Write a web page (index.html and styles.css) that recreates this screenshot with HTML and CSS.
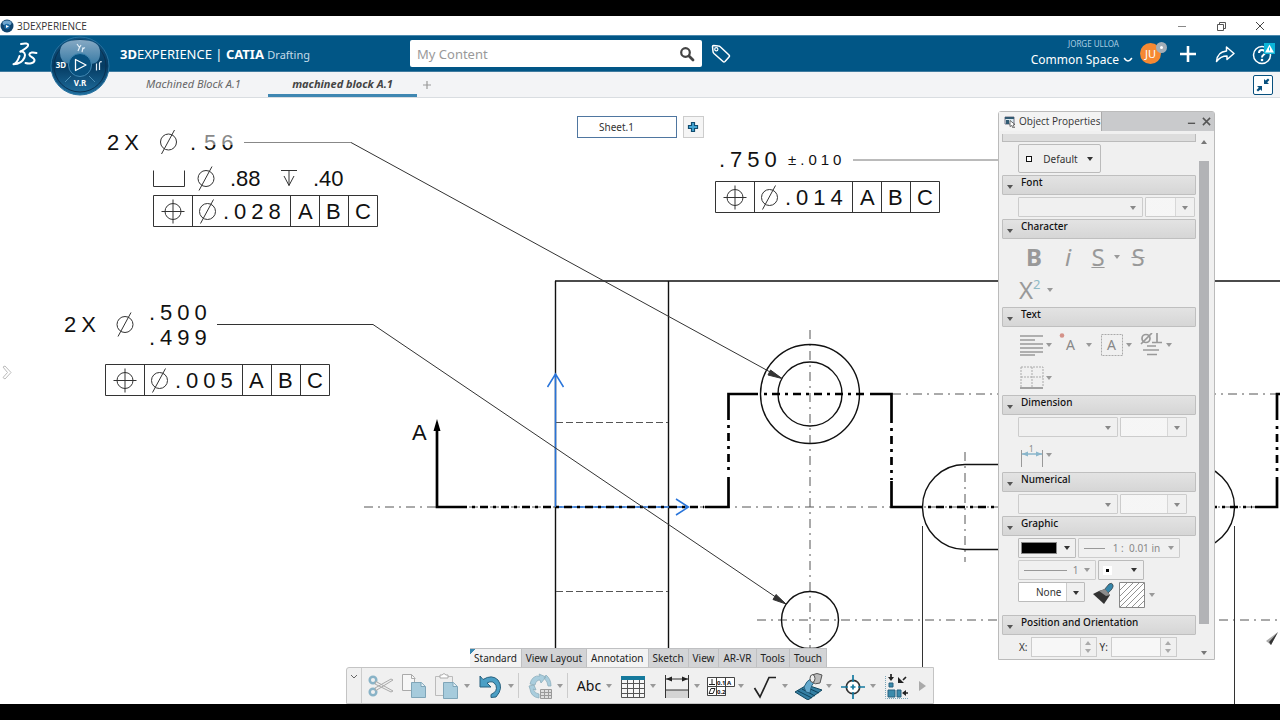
FILE: index.html
```html
<!DOCTYPE html>
<html lang="en">
<head>
<meta charset="utf-8">
<title>3DEXPERIENCE</title>
<link rel="stylesheet" href="styles.css">
</head>
<body>
<div class="app">
  <div class="titlebar">
    <svg class="app-icon" viewBox="0 0 14 14" aria-hidden="true"><circle cx="7" cy="7" r="6.5" fill="#10456f"/><ellipse cx="7" cy="4" rx="4.5" ry="2.5" fill="#6fa6cf"/><circle cx="7" cy="7.5" r="2.8" fill="#1769a5"/><path d="M6 6l3 1.5-3 1.5z" fill="#fff"/></svg>
    <span class="titlebar-name">3DEXPERIENCE</span>
    <button class="win-btn" aria-label="Minimize"><svg viewBox="0 0 10 10"><path d="M1 5.5h8" stroke="#888"/></svg></button>
    <button class="win-btn" aria-label="Restore"><svg viewBox="0 0 10 10"><path d="M1.500 3.500h6v6h-6zM3.500 3.500v-2h6v6h-2" fill="none" stroke="#555"/></svg></button>
    <button class="win-btn" aria-label="Close"><svg viewBox="0 0 10 10"><path d="M1 1l8 8M9 1l-8 8" stroke="#444"/></svg></button>
  </div>

  <header class="header">
    <svg class="ds-logo" viewBox="0 0 26 24" aria-label="Dassault Systemes"><g fill="none" stroke="#fff" stroke-width="2" stroke-linecap="round" stroke-linejoin="round"><path d="M9 2C13 1 17 1.200 16 3.700C15.500 5.500 12 7.500 8.500 9.500"/><path d="M8.500 9.500C12 9 14 12 12.500 15.500C10.500 20 6 22 1.500 22.200C5 21 6.500 17 7.500 14"/><path d="M24.500 11C21 10 17.500 10.300 17.300 12.500C17.300 15 23 15.500 22.500 18.500C22 21.500 17 22 13.500 21"/></g></svg>
    <h1 class="brand"><b>3D</b>EXPERIENCE <span class="brand-bar">|</span> <b>CATIA</b> <small>Drafting</small></h1>
    <div class="search">
      <input class="search-input" type="text" placeholder="My Content" aria-label="Search">
      <button class="search-btn" aria-label="Search"><svg viewBox="0 0 16 16"><circle cx="6.500" cy="6.500" r="4.300" fill="none" stroke="#444" stroke-width="2.200"/><path d="M10 10l4 4" stroke="#444" stroke-width="2.800" stroke-linecap="round"/></svg></button>
    </div>
    <button class="icon-btn tag-btn" aria-label="Tags"><svg viewBox="0 0 20 20"><path d="M1.500 2.500q0-1 1-1l5 .5q1 0 2 1l8.500 8q1 1 0 2l-4 4.500q-1 1-2 0L3 9.500Q2 8.500 2 7.500z" fill="none" stroke="#fff" stroke-width="1.500"/><circle cx="5.300" cy="5.300" r="1.600" fill="none" stroke="#fff" stroke-width="1.200"/></svg></button>
    <div class="user">
      <span class="user-name">JORGE ULLOA</span>
      <button class="space-btn">Common Space <svg viewBox="0 0 10 10"><path d="M1.500 3.500q1.800 2.500 3.500 2.500t3.500-2.500" fill="none" stroke="#fff" stroke-width="1.600" stroke-linecap="round"/></svg></button>
    </div>
    <button class="avatar" aria-label="Profile">JU<span class="status"></span></button>
    <button class="icon-btn" aria-label="Add"><svg viewBox="0 0 20 20"><path d="M10 2v16M2 10h16" stroke="#fff" stroke-width="2.600"/></svg></button>
    <button class="icon-btn" aria-label="Share"><svg viewBox="0 0 20 20"><path d="M11.500 3l7.500 6.500-7 6v-3.500C7.500 12 4.500 13.500 1.500 17.500C2 11.500 5.500 7.500 11.500 7z" fill="none" stroke="#fff" stroke-width="1.500" stroke-linejoin="round"/></svg></button>
    <button class="icon-btn help-btn" aria-label="Help"><svg viewBox="0 0 24 24"><circle cx="12" cy="13" r="8.500" fill="none" stroke="#fff" stroke-width="1.500"/><path d="M9 11q0-3 3-3t3 2.600q0 1.400-1.500 2.200T12 15.500" fill="none" stroke="#fff" stroke-width="2"/><circle cx="12" cy="18" r="1.300" fill="#fff"/><path d="M14 1h11v11h-11z" fill="#0bb4d8"/><path d="M19.500 2.500l4.500 8h-9z" fill="#fff"/><path d="M19.500 5.500v3" stroke="#0bb4d8"/></svg></button>
    <button class="compass" aria-label="Compass">
      <svg viewBox="0 0 62 62">
        <defs><linearGradient id="disc" x2="0" y2="1"><stop stop-color="#0f527f"/><stop offset=".5" stop-color="#053b62"/><stop offset="1" stop-color="#1f6f9f"/></linearGradient><linearGradient id="shine" x2="0" y2="1"><stop stop-color="#86a9c4"/><stop offset="1" stop-color="#397ba5"/></linearGradient></defs>
        <circle cx="31" cy="30" r="29" fill="url(#disc)" stroke="#2873a1"/>
        <circle cx="31" cy="30" r="26" fill="none" stroke="#0a3152" stroke-width="1"/>
        <path d="M11 17Q10 4 31 4T51 17Q51 28 41 28Q39 20 31 20T21 28Q11 27 11 17z" fill="url(#shine)"/>
        <circle cx="31" cy="29" r="11.500" fill="#07507e" stroke="#4288b2"/>
        <path d="M26.500 23.500l10.500 5.500-10.500 5.500z" fill="none" stroke="#fff" stroke-width="1.300" stroke-linejoin="round"/>
        <path d="M22 40l-6 6M40 40l6 6" stroke="#4b8eb5"/>
        <path d="M28 8l2.500 3.500L32 9M30.500 11.500L29 15M34 11.500L33 16M34 13q1-1.500 2-1" fill="none" stroke="#e2eef7" stroke-width="1.200"/>
        <path d="M47.500 27.500v7M50.500 27v7M50.500 27q1-2 2.200-1" fill="none" stroke="#e2eef7" stroke-width="1.200"/>
        <text x="12" y="32" class="compass-text">3D</text><text x="31" y="50" class="compass-text">V.R</text>
      </svg>
    </button>
  </header>

  <nav class="doc-tabs">
    <button class="doc-tab">Machined Block A.1</button>
    <button class="doc-tab doc-tab-on">machined block A.1</button>
    <button class="add-tab" aria-label="New tab"><svg viewBox="0 0 10 10"><path d="M5 1v8M1 5h8" stroke="#999" stroke-width="1.200"/></svg></button>
    <button class="collapse-btn" aria-label="Collapse"><svg viewBox="0 0 16 16"><path d="M9 7V2l1.600 1.600L13 1.500 14.500 3l-2.300 2.300L14 7zM7 9v5l-1.600-1.600L3 14.500 1.500 13l2.300-2.300L2 9z" fill="#07507e"/></svg></button>
  </nav>

  <main class="canvas">
    <svg class="drawing" viewBox="0 98 1280 606" preserveAspectRatio="xMinYMin slice">
      <defs>
        <g id="diameter"><circle r="8"/><path d="M-7 12L6 -12"/></g>
        <g id="frame" class="thin"><path d="M0 0h224v31h-224zM39 0v31M137 0v31M166 0v31M195 0v31"/><circle cx="19.500" cy="16" r="8"/><path d="M8 16h23M19.500 4v24"/><use href="#diameter" x="54" y="16"/></g>
      </defs>

      <g class="center">
        <path d="M364 507H1280M892 394H1280M757 620H1280M810 330V648M965 452V562"/>
      </g>
      <g class="outline">
        <path d="M555.500 704V281M668.500 281V704M555 281H1280"/>
        <circle cx="810" cy="394" r="49.500"/><circle cx="810" cy="394" r="32"/><circle cx="810" cy="620" r="28.500"/>
        <rect x="922.500" y="464.500" width="312" height="85" rx="42.500"/>
      </g>
      <path class="hidden-edge" d="M556 422.500H668M556 591.500H668"/>
      <path class="axis" d="M555.500 507V375M547.500 387L555.500 374L563.500 387M556 507H688M676 499L688.500 507L676 515"/>
      <g class="section">
        <path d="M437 430V507H467M705 507H728.500V477M728.500 420V394H758M870 394H891.500V423M891.500 481V507H922M1255 507H1277V477M1277 420V394H1280"/>
        <path class="section-dash" d="M472 507H704M764 394H869M728.500 425V475M891.500 428V480M928 507H1252M1277 426V475"/>
      </g>
      <path d="M437 419l-3.500 12h7z"/>
      <g class="thin">
        <path stroke="#888" d="M244 142.500H351"/>
        <path d="M351 142.500L782 378.500M217 324.500H373L786 604M922.500 526V704M1234.500 526V704"/>
        <path stroke="#777" d="M853 160H1000"/>
        <path fill="#333" d="M782 378.500l-14-3.500 2.500-5zM786 604l-13-4.500 3-5z"/>
        <path d="M153.500 170.500v16h31v-16M281 170.500h16M289 170.500v15M284 176l5 9.500 5-9.500"/>
        <use href="#diameter" x="168.500" y="142"/>
        <use href="#diameter" x="206" y="178.500"/>
        <use href="#diameter" x="125" y="324.500"/>
      </g>
      <use href="#frame" x="153.500" y="195.500"/>
      <use href="#frame" x="105.500" y="364.500"/>
      <use href="#frame" x="715.500" y="181.500"/>
      <linearGradient id="fade" x2="0" y2="1"><stop offset=".6" stop-color="#888"/><stop offset=".6" stop-color="#111"/></linearGradient>
      <g class="note">
        <text x="107" y="150">2X</text><text x="190" y="150">.</text><text class="fading" x="204" y="150">56</text>
        <text class="tight" x="230" y="186">.88</text><text class="tight" x="313" y="186">.40</text>
        <text x="223" y="219">.028</text><text x="298" y="219">A</text><text x="326" y="219">B</text><text x="355" y="219">C</text>
        <text x="64" y="332">2X</text><text x="149" y="320">.500</text><text x="149" y="345">.499</text>
        <text x="175" y="388">.005</text><text x="249" y="388">A</text><text x="278" y="388">B</text><text x="307" y="388">C</text>
        <text x="719" y="167">.750</text><text class="tolerance" x="788" y="165">±.010</text>
        <text x="785" y="205">.014</text><text x="860" y="205">A</text><text x="888" y="205">B</text><text x="917" y="205">C</text>
        <text x="412" y="440">A</text>
      </g>
      <path fill="#aaa" d="M1266 641l12-9-7 13z"/><path fill="#333" d="M1271 645l-2-3 9-10z"/>
      <path d="M3 367l2-1 6 6.500-6 6.500-2-1.500 4.500-5z" fill="none" stroke="#bbb"/>
    </svg>

    <div class="sheets">
      <button class="sheet">Sheet.1</button>
      <button class="sheet-add" aria-label="Add sheet"><svg viewBox="0 0 12 12"><path d="M4.500 1.500h3v3h3v3h-3v3h-3v-3h-3v-3h3z" fill="#45a7d5" stroke="#124d70" stroke-width="1.200"/></svg></button>
    </div>

    <section class="panel">
      <div class="panel-top">
        <h2 class="panel-tab"><svg viewBox="0 0 12 12"><path d="M1 1h9v7H1z" fill="#dcebf2" stroke="#778"/><path d="M1 1h9v2H1zM2 4h3v4H2z" fill="#315a72"/><path d="M6 4.500l5 4-2 .5 1.500 2.500-1.500.5-1.200-2.500-1.800 1z" fill="#fff" stroke="#333" stroke-width=".7"/></svg>Object Properties</h2>
        <button class="panel-btn" aria-label="Minimize"><svg viewBox="0 0 10 10"><path d="M1 7h8" stroke="#555" stroke-width="1.500"/></svg></button>
        <button class="panel-btn" aria-label="Close"><svg viewBox="0 0 10 10"><path d="M1 1l8 8M9 1l-8 8" stroke="#555" stroke-width="1.700"/></svg></button>
      </div>
      <div class="panel-main">
        <div class="groups">
          <div class="group-cut"></div>
          <div class="row"><button class="default-btn"><span class="square"></span>Default<i class="caret dark"></i></button></div>
          <h3 class="group">Font</h3>
          <div class="row"><span class="combo combo-l"><select aria-label="Font name" disabled></select></span><span class="combo combo-s"><select aria-label="Font size" disabled></select></span></div>
          <h3 class="group">Character</h3>
          <div class="row tall letters">
            <button class="fmt" disabled><b>B</b></button><button class="fmt" disabled><i>i</i></button><button class="fmt underlined" disabled><u>S</u></button><i class="caret"></i><button class="fmt struck" disabled><s>S</s></button>
          </div>
          <div class="row tall letters"><button class="fmt sup" disabled>X<sup>2</sup></button><i class="caret"></i></div>
          <h3 class="group">Text</h3>
          <div class="row tall tools-row">
            <button class="mini" aria-label="Justify"><svg viewBox="0 0 24 24"><path d="M1 3h23M1 7h15M1 11h23M1 15h23M1 19h23M1 22h15" stroke="#999" stroke-width="1.600"/></svg><i class="caret"></i></button>
            <button class="mini" aria-label="Anchor"><svg viewBox="0 0 24 24"><circle cx="3" cy="2.500" r="2.300" fill="#d49289"/><text class="glyph" x="7" y="17">A</text></svg><i class="caret"></i></button>
            <button class="mini" aria-label="Frame"><svg viewBox="0 0 24 24"><path d="M2.500 1.500h21v21h-21z" fill="none" stroke="#aaa" stroke-dasharray="2 1"/><text class="glyph" x="8" y="17">A</text></svg><i class="caret"></i></button>
            <button class="mini" aria-label="Symbols"><svg viewBox="0 0 24 24"><g fill="none" stroke="#999" stroke-width="1.700"><circle cx="7" cy="5.500" r="4"/><path d="M2 11L13 0M18 0v9M13 9.500h10M8 13h9M4 17h16M8 21.500h10"/></g></svg><i class="caret"></i></button>
          </div>
          <div class="row tall tools-row"><button class="mini" aria-label="Borders"><svg viewBox="0 0 24 24"><path d="M2 1h22v20M2 1v20M13 1v20M2 11h22" fill="none" stroke="#aaa" stroke-dasharray="2 1"/><path d="M1 22h23" stroke="#888" stroke-width="1.500"/></svg><i class="caret"></i></button></div>
          <h3 class="group">Dimension</h3>
          <div class="row"><span class="combo combo-m"><select aria-label="Tolerance type" disabled></select></span><span class="combo combo-n"><select aria-label="Tolerance" disabled></select></span></div>
          <div class="row tall tools-row"><button class="mini" aria-label="Dimension line"><svg viewBox="0 0 24 24"><path d="M2.500 7v17M23.500 7v17" stroke="#999"/><path d="M3 11h20" stroke="#8ab6cb" stroke-width="1.500"/><path d="M3 11l6-2.500v5zM23 11l-6-2.500v5z" fill="#8ab6cb"/><text class="tiny-glyph" x="10" y="9">1</text></svg><i class="caret"></i></button></div>
          <h3 class="group">Numerical</h3>
          <div class="row"><span class="combo combo-m"><select aria-label="Numerical format" disabled></select></span><span class="combo combo-n"><select aria-label="Precision" disabled></select></span></div>
          <h3 class="group">Graphic</h3>
          <div class="row graphic">
            <button class="box color" aria-label="Color"><span class="swatch"></span><i class="caret dark"></i></button>
            <button class="box weight" disabled><span class="stroke short"></span>1 : &nbsp;0.01 in<i class="caret"></i></button>
          </div>
          <div class="row graphic">
            <button class="box line-type" disabled><span class="stroke"></span>1<i class="caret"></i></button>
            <button class="box point" aria-label="Point symbol"><span class="dot"></span><i class="caret dark"></i></button>
          </div>
          <div class="row fill-row">
            <span class="combo none-combo"><select aria-label="Layer"><option>None</option></select></span>
            <button class="mini" aria-label="Paint"><svg viewBox="0 0 24 24"><path d="M12 8l5-6q3-2 4 1t-5 8z" fill="#3686aa" stroke="#333" stroke-width=".7"/><path d="M7 9l6-2 5 6-6 9L1 12z" fill="#333"/><path d="M7 9l6-2 5 6-4 1z" fill="#8c8c8c"/></svg></button>
            <button class="mini hatch" aria-label="Hatch"><svg viewBox="0 0 26 26"><path d="M.5.5h25v25H.5z" fill="#fff" stroke="#888"/><path d="M1 8L8 1M1 14L14 1M1 20L20 1M1 25L25 1M7 25L25 7M13 25L25 13M19 25l6-6" stroke="#777" stroke-width=".8"/></svg><i class="caret"></i></button>
          </div>
          <h3 class="group">Position and Orientation</h3>
          <div class="row position">
            <label for="px">X:</label><span class="spin"><input id="px" type="text" disabled><span class="spin-arrows"><i></i><i></i></span></span>
            <label for="py">Y:</label><span class="spin"><input id="py" type="text" disabled><span class="spin-arrows"><i></i><i></i></span></span>
          </div>
        </div>
        <div class="scroll"><i class="scroll-up"></i><span class="thumb"></span><i class="caret"></i></div>
      </div>
    </section>

    <div class="dock">
      <div class="bar-tabs">
        <button class="bar-tab on first">Standard</button><button class="bar-tab">View Layout</button><button class="bar-tab on">Annotation</button><button class="bar-tab">Sketch</button><button class="bar-tab">View</button><button class="bar-tab">AR-VR</button><button class="bar-tab">Tools</button><button class="bar-tab">Touch</button>
      </div>
      <div class="toolbar">
        <button class="fold" aria-label="Collapse toolbar"><svg viewBox="0 0 10 10"><path d="M2 3l3 3 3-3" fill="none" stroke="#666"/></svg></button>
        <button class="tool plain" aria-label="Cut"><svg viewBox="0 0 28 28"><g fill="none" stroke="#89b3c7" stroke-width="2.500"><circle cx="6" cy="8" r="3.300"/><circle cx="6" cy="20" r="3.300"/></g><path d="M9 9.500L26 19l-2 1-16-8zM9 18.500L26 8l-2-1L8 16z" fill="#eee" stroke="#aaa"/></svg></button>
        <button class="tool plain" aria-label="Copy"><svg viewBox="0 0 28 28"><path d="M2.500 2.500h9l3 3v13h-12z" fill="#f7f7f7" stroke="#aaa"/><path d="M11.500 2.500v4h4" fill="none" stroke="#aaa"/><path d="M11.500 10.500h10l4 4v11h-14z" fill="#a6cbdc" stroke="#7fa5b8"/><path d="M21 10.500v4h4" fill="#e6f1f6" stroke="#7fa5b8"/></svg></button>
        <button class="tool" aria-label="Paste"><svg viewBox="0 0 28 28"><path d="M2.500 4.500h17v19h-17z" fill="#eee" stroke="#bbb"/><path d="M7 6V3h2q2-3 4 0h2v3z" fill="#fff" stroke="#aaa"/><path d="M10.500 10.500h10l4 4v12h-14z" fill="#a6cbdc" stroke="#7fa5b8"/><path d="M20 10.500v4h4" fill="#e6f1f6" stroke="#7fa5b8"/></svg><i class="caret"></i></button>
        <button class="tool" aria-label="Undo"><svg viewBox="0 0 28 28"><path d="M3 4l3 3.500Q15 2 21 8q6 8-2 17l-5 .5v-3q7-3 5-9-3-6-9-2.500l4 4H3z" fill="#4b9fc5" stroke="#28617e"/></svg><i class="caret"></i></button>
        <span class="sep"></span>
        <button class="tool" aria-label="Update"><svg viewBox="0 0 28 28"><g fill="#a9cddd" stroke="#8daebc" stroke-width=".8"><path d="M4 12Q6 3 14 4l-1-2 7 3-5 6-1-3q-4 0-5 5zM18 6l2-3q5 4 5 11h-3q0-4-4-8zM3 14l5-1 2 5-3-1q2 5 6 5v4Q5 25 4 17z"/></g><path d="M14.500 17.500h11v9h-11zM14 20.500h11M14 23.500h11M18.500 17v9M22.500 17v9" fill="#ddd" stroke="#999"/></svg><i class="caret"></i></button>
        <span class="sep"></span>
        <button class="tool text-tool"><span>Abc</span><i class="caret"></i></button>
        <button class="tool" aria-label="Table"><svg viewBox="0 0 28 28"><path d="M2.500 4.500h23v21h-23zM2.500 11.500h23M2.500 16.500h23M2.500 21.500h23M8.500 7v18M14.500 7v18M20.500 7v18" fill="#f7f7f7" stroke="#555"/><path d="M2 4h24v4H2z" fill="#15799c"/></svg><i class="caret"></i></button>
        <button class="tool" aria-label="Dimensions"><svg viewBox="0 0 28 28"><path d="M3 18h22v8H3z" fill="#d4d4d4"/><path d="M2.500 3v23M25.500 3v23M3 7h22M3 18h22" stroke="#333"/><path d="M3 7l6-2.500v5zM25 7l-6-2.500v5z" fill="#222"/></svg><i class="caret"></i></button>
        <button class="tool" aria-label="Tolerances"><svg viewBox="0 0 28 28"><path d="M.5 5.500h27v9H.5zM9.500 5.500v18M18.500 5.500v18M.5 14.500h18v9H.5z" fill="#fff" stroke="#444"/><path d="M2 12.500h6M5 7v5.500M2 21.500l2-5h4l-2 5z" fill="none" stroke="#222"/><text class="micro-glyph" x="10" y="13">0.1</text><text class="micro-glyph" x="20" y="13">A</text><text class="micro-glyph" x="10" y="22">0.2</text></svg><i class="caret"></i></button>
        <button class="tool" aria-label="Roughness"><svg viewBox="0 0 28 28"><path d="M3.500 16l5.500 9L18 5.500h7" fill="none" stroke="#222" stroke-width="1.700"/></svg><i class="caret"></i></button>
        <button class="tool" aria-label="Area fill"><svg viewBox="0 0 28 28"><path d="M0 20l12-7 15 5-14 10z" fill="#347fa3" stroke="#12475f"/><path d="M3 19l14 7M7 17l13 7M11 15l13 6" stroke="#0e425b"/><path d="M11 20L9 15q2-6 8-9l3 4q-4 2-5 11z" fill="#65aace" stroke="#28617e"/><path d="M17 3q5-3 10 0l-2 8q-5 2-8-1z" fill="#bbb" stroke="#555"/><ellipse cx="17.500" cy="6.500" rx="2.500" ry="3.800" fill="#eee" stroke="#555"/></svg><i class="caret"></i></button>
        <button class="tool" aria-label="Center line"><svg viewBox="0 0 28 28"><circle cx="14" cy="15" r="6.700" fill="#fff" stroke="#333" stroke-width="1.700"/><path d="M14 3v7M14 20v7M2 15h7M19 15h7M11.500 15h5M14 12.500v5" stroke="#1579a0" stroke-width="1.700"/></svg><i class="caret"></i></button>
        <button class="tool plain" aria-label="Positioning"><svg viewBox="0 0 28 28"><path d="M2.500 4v22.500H25" fill="none" stroke="#7aa6b9" stroke-dasharray="1 1"/><path d="M6 11h4v4H6zM5 18h7v7H5zM14 18h4v7h-4z" fill="#3b8bac" stroke="#28617e"/><path d="M8 2v3M23 5l-3 3M25 21h-3" stroke="#222" stroke-width="1.700"/><path d="M5 5h6L8 9zM15 11v-6l6 6zM19 21l4-3v6z" fill="#222"/></svg></button>
        <button class="more" aria-label="More"><i></i></button>
      </div>
    </div>
  </main>
</div>
</body>
</html>
```
FILE: styles.css
```css
* { box-sizing: border-box; }
body { margin: 0; background: #000; color: #333; font-family: "Noto Sans", "Open Sans", sans-serif; font-size: 11px; }
button, input, select { font: inherit; color: inherit; padding: 0; border: 0; background: none; border-radius: 0; }
button { display: flex; align-items: center; justify-content: center; white-space: nowrap; }
svg { display: block; flex: none; }
h1, h2, h3 { margin: 0; font-weight: 400; }

.app { min-height: 100vh; padding: 16px 0; display: flex; flex-direction: column; }
.titlebar { height: 20px; background: #fff; display: flex; align-items: center; padding-right: 1px; border-bottom: 1px solid #4a89ae; }
.app-icon { width: 14px; height: 14px; }
.titlebar-name { flex: 1; padding-left: 3px; font-family: "Open Sans", sans-serif; font-size: 10px; }
.win-btn { width: 39px; height: 19px; }
.win-btn svg { width: 10px; height: 10px; }

.header { position: relative; height: 36px; background: #015686; color: #fff; display: flex; align-items: center; border-bottom: 1px solid #3f7ba0; }
.ds-logo { width: 26px; height: 24px; margin-left: 12px; }
.brand { width: 372px; padding-left: 82px; font-size: 13px; white-space: nowrap; }
.brand small { font-size: 11px; color: #c5dce9; }
.search { width: 292px; height: 27px; background: #fff; border-radius: 2px; display: flex; }
.search-input { flex: 1; min-width: 0; padding-left: 7px; font-size: 13px; outline: 0; }
.search-input::placeholder { color: #999; opacity: 1; }
.search-btn { width: 30px; }
.search-btn svg { width: 16px; height: 16px; }
.icon-btn { width: 37px; height: 34px; }
.icon-btn svg { width: 20px; height: 20px; }
.help-btn svg { width: 24px; height: 24px; overflow: visible; }
.tag-btn { margin-right: auto; }
.user { display: flex; flex-direction: column; align-items: flex-end; margin-right: 7px; }
.user-name { font-size: 8px; line-height: 12px; color: #a9cde2; padding-right: 14px; }
.space-btn { font-size: 12px; line-height: 20px; gap: 4px; }
.space-btn svg { width: 10px; height: 10px; }
.avatar { position: relative; width: 21px; height: 21px; margin-right: 8px; border-radius: 50%; background: #f68932; font-size: 11px; }
.status { position: absolute; right: -6px; top: -1px; width: 11px; height: 11px; border-radius: 50%; border: 4px solid #a3aeb7; background: #fff; }
.compass { position: absolute; left: 49px; top: 0; z-index: 2; }
.compass svg { width: 62px; height: 62px; }
.compass-text { font-size: 8px; font-weight: 700; fill: #fff; text-anchor: middle; }

.doc-tabs { height: 26px; background: #f3f4f6; border-bottom: 1px solid #d9dde1; display: flex; align-items: stretch; padding-left: 119px; color: #666; }
.doc-tab { width: 149px; font-style: italic; font-size: 11px; border-bottom: 3px solid transparent; }
.doc-tab-on { font-weight: 700; color: #444; border-color: #3f87b2; }
.add-tab { width: 20px; }
.add-tab svg { width: 10px; height: 10px; }
.collapse-btn { width: 20px; height: 20px; margin: 3px 7px 0 auto; border: 1px solid #07507e; border-radius: 2px; background: #fff; }
.collapse-btn svg { width: 16px; height: 16px; }

.canvas { position: relative; flex: 1; min-height: 606px; overflow: hidden; background: #fff; }
.drawing { position: absolute; width: 100%; height: 100%; }
.thin { fill: none; stroke: #333; stroke-width: 1; }
.outline { fill: none; stroke: #111; stroke-width: 1.400; }
.center { fill: none; stroke: #555; stroke-dasharray: 9 5 2 5; }
.hidden-edge { fill: none; stroke: #555; stroke-dasharray: 7 3; }
.axis { fill: none; stroke: #2874da; stroke-width: 1.500; }
.section { fill: none; stroke: #000; stroke-width: 2.700; }
.section-dash { stroke-dasharray: 3 5 8 5; }
/* Drafting lettering is set wide */
.note { font-family: "Liberation Sans", sans-serif; font-size: 22px; letter-spacing: 5px; fill: #111; }
.note .tight { letter-spacing: 0; }
.note .tolerance { font-size: 15px; letter-spacing: 4px; }
.note .fading { fill: url(#fade); }

.sheets { position: absolute; left: 0; right: 0; top: 18px; display: flex; justify-content: center; gap: 6px; }
.sheet { width: 100px; height: 22px; border: 1px solid #4f76a0; background: #fff; padding-right: 20px; font-size: 10px; }
.sheet-add { width: 21px; height: 22px; border: 1px solid #ccc; background: #f5f5f5; }
.sheet-add svg { width: 12px; height: 12px; }

.panel { position: absolute; right: 65px; top: 13px; width: 217px; border: 1px solid #bbb; border-radius: 3px 3px 0 0; background: #f0f0f0; }
.panel-top { height: 19px; background: #c9cacc; display: flex; align-items: center; padding-right: 0; }
.panel-tab { height: 19px; width: 103px; display: flex; align-items: center; gap: 3px; padding-left: 5px; margin-right: auto; background: #f3f3f3; border-right: 1px solid #aaa; font-family: "Open Sans", sans-serif; font-size: 10px; line-height: 19px; white-space: nowrap; }
.panel-tab svg { width: 12px; height: 12px; }
.panel-btn { width: 15px; height: 15px; }
.panel-btn svg { width: 9px; height: 9px; }
.panel-main { display: flex; padding: 3px 4px 2px 3px; gap: 2px; }
.groups { flex: 1; min-width: 0; display: flex; flex-direction: column; gap: 2px; }
.group-cut { height: 8px; background: #ddd; border: 1px solid #bbb; border-top: 0; }
.group { position: relative; height: 20px; padding-left: 18px; background: linear-gradient(#e3e3e3, #d6d6d6); border: 1px solid #bfbfbf; border-radius: 1px; font-size: 10px; font-weight: 500; line-height: 13px; color: #111; }
.group::before { content: ""; position: absolute; left: 4px; top: 9px; border: 3px solid transparent; border-top: 4px solid #555; border-bottom: 0; }
.row { display: flex; align-items: center; gap: 2px; padding-left: 16px; min-height: 20px; }
.tall { height: 31px; }
.caret { display: inline-block; flex: none; width: 0; height: 0; border: 3px solid transparent; border-top: 4px solid #999; border-bottom: 0; }
.dark { border-top-color: #333; }
.default-btn { width: 83px; height: 29px; border: 1px solid #bbb; border-radius: 2px; gap: 9px; font-size: 10px; }
.square { width: 6px; height: 6px; margin-right: 2px; border: 1px solid #111; background: #fff; }
.combo { position: relative; height: 20px; border: 1px solid #ccc; border-radius: 1px; background: #f0f0f0; }
.combo::after { content: ""; position: absolute; right: 6px; top: 8px; border: 3px solid transparent; border-top: 4px solid #888; border-bottom: 0; pointer-events: none; }
.combo select { width: 100%; height: 100%; appearance: none; display: block; }
.combo-l { width: 125px; }
.combo-s { width: 50px; }
.combo-m { width: 100px; }
.combo-n { width: 67px; }
.combo-s select, .combo-n select { background: linear-gradient(90deg, #f8f8f8 calc(100% - 19px), #ccc calc(100% - 19px), #ccc calc(100% - 18px), #f0f0f0 calc(100% - 18px)); }
.letters { color: #999; gap: 0; }
.fmt { font-size: 24px; line-height: 30px; width: 32px; color: #999; }
.fmt u, .fmt s { text-decoration-thickness: 1px; }
.fmt i { padding-left: 4px; }
.struck { width: 36px; }
.sup { width: 29px; justify-content: flex-start; padding-left: 1px; }
.fmt sup { font-size: 13px; line-height: 13px; margin-bottom: 10px; color: #8fbac6; }
.tools-row { gap: 6px; }
.mini { gap: 4px; }
.mini svg { width: 26px; height: 24px; }
.mini .caret { margin-left: -2px; }
.glyph { font-size: 14px; fill: #888; }
.tiny-glyph { font-size: 8px; fill: #888; }
.box { height: 20px; border: 1px solid #bbb; border-radius: 1px; font-size: 10px; gap: 6px; justify-content: space-between; padding: 0 5px 0 2px; }
.box:disabled { color: #888; border-color: #ccc; }
.color { width: 58px; }
.weight { width: 102px; padding-left: 5px; }
.line-type { width: 78px; padding-left: 5px; gap: 2px; }
.point { width: 46px; padding-right: 6px; }
.swatch { width: 36px; height: 12px; background: #000; border: 1px solid #888; }
.stroke { width: 43px; height: 1px; background: #999; }
.short { width: 21px; }
.dot { width: 9px; height: 9px; border: 3px solid #fff; background: #000; margin-left: 2px; }
.fill-row { align-items: flex-start; height: 31px; }
.none-combo { width: 67px; border-color: #bbb; font-size: 10px; margin-right: 4px; }
.none-combo::after { right: 5px; border-top-color: #333; }
.none-combo select { background: linear-gradient(90deg, #fff calc(100% - 18px), #ccc calc(100% - 18px), #ccc calc(100% - 17px), #f0f0f0 calc(100% - 17px)); padding-left: 17px; color: #333; }
.hatch svg { width: 26px; height: 26px; }
.hatch .caret { margin-left: 0; }
.position { gap: 3px; padding-left: 17px; }
.position label { font-size: 10px; }
.spin { width: 66px; height: 20px; display: flex; border: 1px solid #ccc; }
.spin input { flex: 1; min-width: 0; background: #f7f7f7; }
.spin-arrows { width: 16px; display: flex; flex-direction: column; align-items: center; justify-content: center; gap: 4px; border-left: 1px solid #ccc; }
.spin-arrows i { border: 3px solid transparent; border-top: 4px solid #aaa; border-bottom: 0; }
.spin-arrows i:first-child { transform: rotate(180deg); }
.scroll { width: 12px; display: flex; flex-direction: column; align-items: center; padding: 6px 0 2px; }
.scroll-up { border: 3px solid transparent; border-bottom: 4px solid #777; border-top: 0; margin-bottom: 17px; }
.thumb { flex: 1; width: 10px; margin-bottom: 27px; background: #b2b3b6; }
.scroll .caret { border-top-color: #777; }

.dock { position: absolute; left: 0; right: 0; bottom: 0; display: flex; flex-direction: column; align-items: center; pointer-events: none; }
.dock button { pointer-events: auto; }
.bar-tabs { display: flex; height: 19px; padding-left: 17px; }
.bar-tab { padding: 0 4px; background: #d3d4d6; border: 1px solid #bfc0c2; border-width: 1px 1px 0 0; font-size: 10px; color: #222; }
.on { background: #f3f3f3; }
.first { background: linear-gradient(135deg, #3887af 4px, #f3f3f3 4px); }
.toolbar { display: flex; height: 37px; background: #f0f0f0; border: 1px solid #c4c4c4; border-radius: 3px 0 0; }
.fold { width: 15px; align-items: flex-start; padding-top: 4px; border-right: 1px solid #ccc; }
.fold svg { width: 10px; height: 10px; }
.tool { width: 44px; justify-content: flex-start; padding-left: 5px; gap: 3px; }
.tool svg { width: 28px; height: 28px; }
.plain { width: 33px; }
.sep { width: 1px; margin: 5px 2px; background: #ccc; }
.text-tool span { width: 28px; font-size: 14px; color: #111; }
.micro-glyph { font-size: 6px; font-weight: 700; fill: #111; }
.more { width: 22px; }
.more i { border: 5px solid transparent; border-left: 7px solid #aaa; border-right: 0; }
```
